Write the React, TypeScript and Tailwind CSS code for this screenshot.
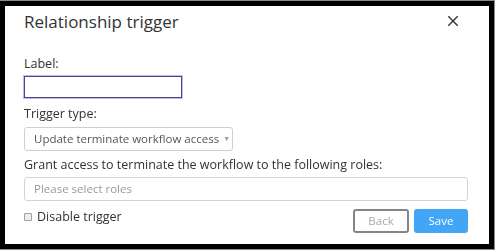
import React from 'react';

const CloseIcon: React.FC<React.SVGProps<SVGSVGElement>> = (props) => (
  <svg xmlns="http://www.w3.org/2000/svg" viewBox="0 0 14 14" fill="none" stroke="currentColor" strokeWidth={1.6} {...props}>
    <path d="M1.5 1.5 12.5 12.5M12.5 1.5 1.5 12.5" />
  </svg>
);

export default function App() {
  return (
    <div className="w-[495px] h-[250px] bg-[#8a8a8a] pt-px pr-px pb-px" style={{ fontFamily: '"Open Sans", "Noto Sans", sans-serif' }}>
      <div className="h-full border-[5px] border-black bg-white flex flex-col px-[19px] text-[#333]">
        <div className="flex items-center justify-between h-[28px] mt-[1px]">
          <h1 className="text-[17px] leading-none">Relationship trigger</h1>
          <button className="text-[#333] mr-[11px]">
            <CloseIcon className="w-[12px] h-[12px]" />
          </button>
        </div>

        <label className="mt-[21px] text-[12.5px] leading-[16px]">Label:</label>
        <input
          type="text"
          autoFocus
          className="mt-[4px] w-[158px] h-[22px] border border-[#5c3d82] outline outline-1 outline-[#a9c4f5] bg-white px-1"
        />

        <label className="mt-[8px] text-[12.5px] leading-[16px]">Trigger type:</label>
        <button className="mt-[5px] w-[209px] h-[24px] border border-[#cfcfcf] rounded-[3px] flex items-center pl-[9px] text-[11.5px] text-[#555] whitespace-nowrap">
          Update terminate workflow access
          <span className="ml-[4px] text-[7px] text-[#999]">▼</span>
        </button>

        <label className="mt-[6px] text-[12.5px] leading-[16px]">Grant access to terminate the workflow to the following roles:</label>
        <div className="mt-[4px] w-[444px] h-[24px] border border-[#d4d4d4] rounded-[3px] flex items-center pl-[9px] text-[11.5px] text-[#999]">
          Please select roles
        </div>

        <div className="mt-[8px] flex items-start justify-between w-[444px]">
          <label className="flex items-center gap-[5px] text-[12.5px] leading-[16px]">
            <span className="w-[8px] h-[8px] border border-[#a0a0a0] bg-[#eee] rounded-[1px]" />
            Disable trigger
          </label>
          <div className="flex gap-[5px]">
            <button className="w-[56px] h-[24px] border-2 border-[#858585] rounded-[3px] text-[11.5px] text-[#aaa]">Back</button>
            <button className="w-[54px] h-[24px] bg-[#42a5f5] rounded-[3px] text-[11.5px] text-white">Save</button>
          </div>
        </div>
      </div>
    </div>
  );
}
